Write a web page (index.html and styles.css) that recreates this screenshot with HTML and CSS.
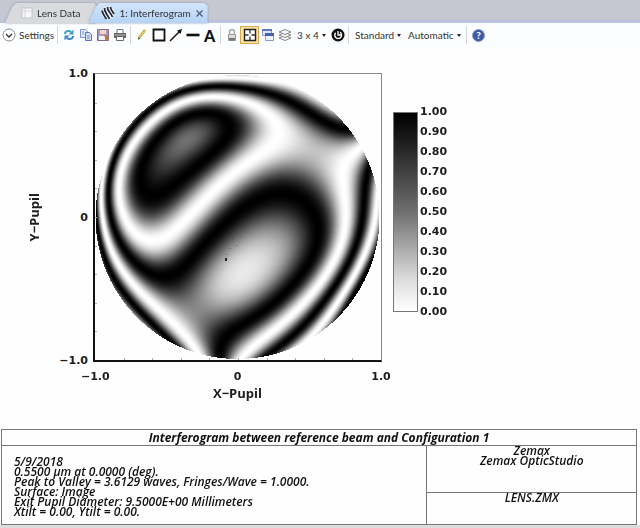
FILE: index.html
```
<!DOCTYPE html>
<html lang="en">
<head>
    <meta charset="UTF-8">
    <meta name="viewport" content="width=device-width, initial-scale=1.0">
    <title>Interferogram</title>
    <link rel="stylesheet" href="styles.css">
</head>
<body>
    <nav class="tabs">
        <div class="tab-wrap">
            <button class="tab">
                <svg width="12" height="12" viewBox="0 0 12 12"><rect x="1" y="1" width="10" height="10" fill="#f8f8f8" stroke="#c4c4c8"/><path d="M1 4h10M4 1v10" stroke="#d6d6da"/></svg>
                Lens Data
            </button>
        </div>
        <div class="tab-wrap">
            <button class="tab active">
                <svg width="14" height="14" viewBox="0 0 14 14"><circle cx="7" cy="7" r="6.500" fill="#f4f7fb"/><g fill="none" stroke="#222b3a" stroke-width="1.800"><path d="M1.200 4.500c0 3 2 5 4.300 8.500"/><path d="M3.500 2c-.5 4 3 6 5 11"/><path d="M6.500 1c-.5 4 3 5 5 10"/><path d="M9.500 1c0 3 2 4 3.500 7"/></g></svg>
                1: Interferogram
                <svg class="close" width="7" height="7" viewBox="0 0 7 7"><path d="M.5.5l6 6M6.500.5l-6 6" stroke="#4a5a78" stroke-width="1.200"/></svg>
            </button>
        </div>
    </nav>

    <div class="toolbar">
        <button class="settings">
            <svg width="14" height="14" viewBox="0 0 14 14"><circle cx="7" cy="7" r="6" fill="#fff" stroke="#8c8c8c"/><path d="M4 6l3 3 3-3" fill="none" stroke="#333" stroke-width="1.300"/></svg>
            Settings
        </button>
        <span class="sep"></span>
        <button class="tool" aria-label="Update">
            <svg viewBox="0 0 14 14"><path d="M3 6c0-3 4-4 6-2" fill="none" stroke="#3b9fc4" stroke-width="2"/><path d="M11.500 1.500v5h-5z" fill="#3b9fc4"/><path d="M11 8c0 3-4 4-6 2" fill="none" stroke="#3b86c8" stroke-width="2"/><path d="M2.500 12.500v-5h5z" fill="#3b86c8"/></svg>
        </button>
        <button class="tool" aria-label="Copy">
            <svg viewBox="0 0 14 14"><path d="M1.500 1.500h5l2 2v6h-7z" fill="#e4ebfb" stroke="#8094d8"/><path d="M6.500 4.500h4l2 2v6h-6z" fill="#d3ddf8" stroke="#5c72c8"/><path d="M8 8h3M8 10h3M3 4h2M3 6h2" stroke="#7f92d8"/></svg>
        </button>
        <button class="tool" aria-label="Save">
            <svg viewBox="0 0 14 14"><path d="M1.500 1.500h11v11h-11z" fill="#a99cc4" stroke="#7e6a9c"/><path d="M4 2h6v4H4z" fill="#f2d6c0"/><path d="M3 8h6v4H3z" fill="#f3f0f6"/><path d="M8 6l5 3-3 4z" fill="#c4713a"/></svg>
        </button>
        <button class="tool" aria-label="Print">
            <svg viewBox="0 0 14 14"><path d="M4 1.500h6v4H4z" fill="#fff" stroke="#777"/><path d="M1 5h12v5H1z" fill="#666"/><path d="M2 7h10" stroke="#bbb"/><path d="M3.500 8.500h7v4h-7z" fill="#fff" stroke="#666"/></svg>
        </button>
        <span class="sep"></span>
        <button class="tool" aria-label="Pencil">
            <svg viewBox="0 0 14 14"><path d="M4 10l6-8" stroke="#c9a640" stroke-width="2.600"/><path d="M4.500 9.500l5.500-7" stroke="#efdc8c"/><path d="M3 12l.3-3 2 1.500z" fill="#555"/></svg>
        </button>
        <button class="tool" aria-label="Rectangle">
            <svg viewBox="0 0 14 14"><path d="M1.500 1.500h11v11h-11z" fill="none" stroke="#111" stroke-width="1.800"/></svg>
        </button>
        <button class="tool" aria-label="Arrow">
            <svg viewBox="0 0 14 14"><path d="M1 13L10 4" stroke="#111" stroke-width="1.500"/><path d="M13 1l-1.500 5-3.500-3.500z" fill="#111"/></svg>
        </button>
        <button class="tool" aria-label="Line">
            <svg viewBox="0 0 14 14"><path d="M.5 7h13" stroke="#111" stroke-width="2.600"/></svg>
        </button>
        <button class="tool letter">A</button>
        <span class="sep"></span>
        <button class="tool" aria-label="Lock">
            <svg viewBox="0 0 14 14"><path d="M4.500 7V4a2.500 2.500 0 0 1 5 0v3" fill="#f4f4f4" stroke="#a5a5a5" stroke-width="1.300"/><path d="M3.500 6.500h7v6h-7z" fill="#dedede" stroke="#999"/><path d="M4 10h6v2.500H4z" fill="#777"/></svg>
        </button>
        <button class="tool selected" aria-label="Fit to window">
            <svg viewBox="0 0 14 14"><path d="M1.500 1.500h11v11h-11z" fill="#fff" stroke="#222" stroke-width="1.400"/><path d="M7 1v4.500M7 8.500V13M1 7h4.500M8.500 7H13" stroke="#333" stroke-width="1.300"/></svg>
        </button>
        <button class="tool" aria-label="Windows">
            <svg viewBox="0 0 14 14"><path d="M1.500 1.500h9v6h-9z" fill="#dfe5f2" stroke="#8d9bc4"/><path d="M1 1h10v2H1z" fill="#6077bd"/><path d="M4.500 5.500h8v7h-8z" fill="#eef1f8" stroke="#8d9bc4"/><path d="M4 5h9v3H4z" fill="#4560b0"/></svg>
        </button>
        <button class="tool" aria-label="Layers">
            <svg viewBox="0 0 14 14"><g fill="#f6f6f6" stroke="#888"><path d="M1 10l6-2.500 6 2.500-6 2.500z"/><path d="M1 7l6-2.500L13 7 7 9.500z"/><path d="M1 4l6-2.500L13 4 7 6.500z"/></g></svg>
        </button>
        <label class="drop"><select aria-label="Window layout"><option>3 x 4</option></select></label>
        <button class="tool" aria-label="Reset">
            <svg viewBox="0 0 14 14"><circle cx="7" cy="7" r="6.500" fill="#0c0c0c"/><path d="M9 4.200A3.400 3.400 0 1 1 4.600 4.800" fill="none" stroke="#fff" stroke-width="1.400"/><path d="M7 3v4h3" fill="none" stroke="#fff" stroke-width="1.300"/></svg>
        </button>
        <span class="sep"></span>
        <label class="drop"><select aria-label="Display"><option>Standard</option></select></label>
        <label class="drop"><select aria-label="Update mode"><option>Automatic</option></select></label>
        <span class="sep"></span>
        <button class="tool help" aria-label="Help">?</button>
    </div>

    <main class="graph">
        <div class="y-title">Y&minus;Pupil</div>
        <div class="y-ticks"><span>1.0</span><span>0</span><span>&minus;1.0</span></div>
        <div class="plot"><canvas id="fringes" width="286" height="286"></canvas></div>
        <div class="scale">
            <div class="scale-bar"></div>
            <ul class="scale-labels">
                <li>1.00</li>
                <li>0.90</li>
                <li>0.80</li>
                <li>0.70</li>
                <li>0.60</li>
                <li>0.50</li>
                <li>0.40</li>
                <li>0.30</li>
                <li>0.20</li>
                <li>0.10</li>
                <li>0.00</li>
            </ul>
        </div>
        <div class="x-axis">
            <div class="x-ticks"><span>&minus;1.0</span><span>0</span><span>1.0</span></div>
            <div class="x-title">X&minus;Pupil</div>
        </div>
    </main>

    <footer>
        <table class="info">
            <tr>
                <th colspan="2">Interferogram between reference beam and Configuration 1</th>
            </tr>
            <tr>
                <td rowspan="2" class="details">
                    5/9/2018<br>
                    0.5500 µm at 0.0000 (deg).<br>
                    Peak to Valley = 3.6129 waves, Fringes/Wave = 1.0000.<br>
                    Surface: Image<br>
                    Exit Pupil Diameter: 9.5000E+00 Millimeters<br>
                    Xtilt = 0.00, Ytilt = 0.00.
                </td>
                <td class="product">Zemax<br>Zemax OpticStudio</td>
            </tr>
            <tr>
                <td class="file">LENS.ZMX</td>
            </tr>
        </table>
    </footer>

    <script src="fringes.js"></script>
</body>
</html>
```
FILE: styles.css
```
:root {
    --ui-font: Lato, "Open Sans", sans-serif;
    --graph-font: "Open Sans", "Noto Sans", sans-serif;
    --tick-font: "DejaVu Sans", sans-serif;
    --line: #777;
    --ink: #1c1c1c;
}

* {
    box-sizing: border-box;
}

body {
    margin: 0;
    min-height: 100vh;
    display: flex;
    flex-direction: column;
    background: #fefefe;
    color: var(--ink);
    font-family: var(--graph-font);
}

button,
select {
    border: 0;
    padding: 0;
    background: none;
    color: #333;
    font-family: var(--ui-font);
    font-size: 10px;
}

/* tabs */
.tabs {
    display: flex;
    height: 23px;
    padding: 3px 0 0 5px;
    background: #c5c8d1;
    border-bottom: 3px solid #bac3dc;
}

.tab-wrap {
    height: 20px;
    filter: drop-shadow(0 0 1px #8b93a5);
}

.tab-wrap + .tab-wrap {
    margin-left: -8px;
}

.tab {
    display: flex;
    align-items: center;
    gap: 4px;
    height: 20px;
    padding: 0 16px 0 16px;
    background: #d9dade;
    clip-path: polygon(0 100%, 7px 20%, 11px 0, 97% 0, 100% 15%, 100% 100%);
}

.tab.active {
    padding: 0 5px 0 13px;
    background: linear-gradient(#d3e5fb, #b5d3f6);
}

.close {
    margin-left: 1px;
}

/* toolbar */
.toolbar {
    display: flex;
    align-items: center;
    height: 24px;
    padding-left: 2px;
    background: #fcfdfe;
}

.settings {
    display: flex;
    align-items: center;
    gap: 3px;
    margin-right: 1px;
}

.sep {
    width: 1px;
    height: 18px;
    margin: 0 2px;
    background: #d4d6da;
}

.tool {
    display: flex;
    align-items: center;
    justify-content: center;
    width: 17px;
    height: 18px;
}

.tool svg {
    width: 14px;
    height: 14px;
}

.letter {
    color: #111;
    font-size: 16px;
    font-weight: 900;
}

.selected {
    width: 19px;
    border: 1px solid #d9a94c;
    background: #fbe3a4;
}

.drop {
    display: flex;
    align-items: center;
    gap: 3px;
    padding: 0 3px 0 4px;
}

.drop select {
    appearance: none;
}

.drop::after {
    content: "";
    border: 2px solid transparent;
    border-top: 3px solid #222;
    border-bottom: 0;
}

.help {
    width: 13px;
    height: 13px;
    margin-left: 3px;
    border-radius: 50%;
    border: 1px solid #8a9ac4;
    background: #3f5aa6;
    color: #fff;
    font-weight: 900;
}

/* graph */
.graph {
    display: grid;
    grid-template-columns: 46px 42px 289px 1fr;
    column-gap: 5px;
    grid-template-rows: 289px auto;
    width: 100%;
    padding: 26px 0 20px;
    margin-left: -5px;
}

.y-title {
    justify-self: end;
    align-self: center;
    writing-mode: vertical-rl;
    transform: rotate(180deg);
    font-size: 13px;
    line-height: 14px;
    font-weight: 700;
}

.y-ticks,
.x-ticks,
.scale-labels {
    font-family: var(--tick-font);
    font-size: 11px;
    font-weight: 700;
}

.y-ticks {
    display: flex;
    flex-direction: column;
    justify-content: space-between;
    margin: -6px 0;
    line-height: 14px;
    text-align: right;
}

.plot {
    border: 1px solid #888;
    border-left: 2px solid #111;
    border-bottom: 2px solid #111;
}

.plot canvas {
    display: block;
}

.x-axis {
    grid-column: 3;
    padding-top: 8px;
}

.x-ticks {
    display: flex;
    justify-content: space-between;
    margin: 0 -12px;
    line-height: 14px;
}

.x-ticks span {
    width: 26px;
    text-align: center;
}

.x-title {
    font-size: 13px;
    font-weight: 700;
    line-height: 18px;
    text-align: center;
}

.scale {
    display: flex;
    gap: 2px;
    margin: 29px 0 0 6px;
}

.scale-bar {
    width: 25px;
    height: 200px;
    margin-top: 10px;
    border: 1px solid #777;
    background: linear-gradient(#000, #181818 12%, #6f6f6f 50%, #dcdcdc 84%, #fff);
}

.scale-labels {
    margin: 0;
    padding: 0;
    list-style: none;
    line-height: 20px;
}

/* description block */
footer {
    margin-top: auto;
    padding: 0 3px 0 1px;
    border-bottom: 3px solid #ddd;
}

.info {
    width: 100%;
    border-collapse: collapse;
    color: #111;
    font-size: 12px;
    font-style: italic;
    font-weight: 600;
    line-height: 10px;
}

.info th,
.info td {
    border: 1px solid var(--line);
    padding: 0;
}

.info th {
    height: 16px;
    font-weight: 700;
    line-height: 14px;
}

.info .details {
    padding: 4px 12px 0;
}

.product,
.file {
    width: 33%;
    text-align: center;
    vertical-align: top;
}

.product {
    height: 47px;
}

.file {
    height: 32px;
}
```
FILE: fringes.js
```
// Contours of the wavefront: phase in waves, then x,y pairs on the plot grid
const contours = [
    [0.21, [83, 81, 78, 85, 88, 77]],
    [0.17, [96, 74, 71, 89, 79, 73, 87, 89]],
    [0, [46, 102, 49, 90, 64, 62, 104, 43, 136, 49, 112, 85, 68, 118, 50, 115]],
    [-0.25, [160, 54]],
    [-0.5, [25, 116, 31, 76, 55, 46, 98, 24, 135, 23, 165, 34, 184, 53, 172, 69, 148, 90, 135, 101, 98, 133, 88, 149, 58, 166, 35, 153, 23, 139]],
    [-1, [13, 128, 17, 99, 38, 53, 72, 24, 105, 14, 135, 11, 155, 15, 188, 26, 215, 38, 245, 53, 255, 61,
        16, 142, 27, 169, 42, 188, 68, 199, 95, 189, 115, 167, 135, 146, 155, 130, 180, 120, 205, 123, 219, 138, 223, 156, 215, 186, 195, 209, 165, 236, 135, 259, 126, 272, 122, 284]],
    [-1.4, [165, 193, 150, 206]],
    [-1.3, [110, 240, 140, 170]],
    [-1.36, [132, 216, 170, 170]],
    [-1.17, [88, 213]],
    [-1.25, [205, 19]],
    [-1.5, [5, 116, 7, 137, 11, 87, 34, 44, 70, 15, 104, 4, 135, 3, 165, 6, 12, 169, 27, 196, 47, 223, 75, 249, 95, 269, 104, 280]],
    [-2, [1, 145, 5, 169, 15, 196, 33, 224, 62, 253, 80, 271]],
    [-0.66, [205, 72, 212, 82, 222, 92, 228, 82]],
    [-0.72, [195, 90, 210, 97, 226, 68]],
    [-0.5, [258, 73, 250, 103, 250, 136, 248, 156, 238, 186, 218, 216, 192, 246, 155, 273, 148, 284]],
    [0, [272, 86, 275, 96, 268, 129, 265, 156, 245, 206, 222, 236, 195, 263, 172, 281]],
    [0.5, [283, 126, 278, 156, 265, 186, 245, 223, 225, 253, 208, 269]],
    [1, [281, 174, 265, 213, 245, 240]]
];

const canvas = document.getElementById('fringes');
const ctx = canvas.getContext('2d');
const size = canvas.width;
const center = size / 2;
const radius = 142;
const degree = 8;

// Chebyshev products up to the given total degree
function terms(px, py) {
    const x = (px - center) / radius;
    const y = (py - center) / radius;
    const tx = [1, x];
    const ty = [1, y];
    for (let i = 2; i <= degree; i++) {
        tx.push(2 * x * tx[i - 1] - tx[i - 2]);
        ty.push(2 * y * ty[i - 1] - ty[i - 2]);
    }
    const out = [];
    for (let i = 0; i <= degree; i++) {
        for (let j = 0; i + j <= degree; j++) out.push(tx[i] * ty[j]);
    }
    return out;
}

// Least squares fit of the wavefront
function fitWavefront() {
    const m = terms(0, 0).length;
    const a = Array.from({ length: m }, () => new Array(m + 1).fill(0));

    contours.forEach(([phase, xy]) => {
        for (let k = 0; k < xy.length; k += 2) {
            const t = terms(xy[k], xy[k + 1]);
            for (let i = 0; i < m; i++) {
                for (let j = 0; j < m; j++) a[i][j] += t[i] * t[j];
                a[i][m] += t[i] * phase;
            }
        }
    });
    for (let i = 1; i < m; i++) a[i][i] += 0.003;

    for (let c = 0; c < m; c++) {
        for (let r = 0; r < m; r++) {
            if (r === c) continue;
            const f = a[r][c] / a[c][c];
            for (let k = c; k <= m; k++) a[r][k] -= f * a[c][k];
        }
    }
    return a.map((row, i) => row[m] / row[i]);
}

function drawFringes() {
    const w = fitWavefront();
    const image = ctx.createImageData(size, size);

    for (let y = 0; y < size; y++) {
        for (let x = 0; x < size; x++) {
            if (Math.hypot(x + 1 - center, y + 0.5 - center) > radius) continue;
            const phase = terms(x, y).reduce((sum, t, i) => sum + t * w[i], 0);
            const level = 127.5 - 127.5 * Math.cos(2 * Math.PI * phase);
            const at = (y * size + x) * 4;
            image.data[at] = image.data[at + 1] = image.data[at + 2] = level;
            image.data[at + 3] = 255;
        }
    }
    ctx.putImageData(image, 0, 0);

    // dust spots on the surface
    ctx.fillStyle = '#222';
    ctx.fillRect(130, 184, 2, 3);
    ctx.fillStyle = 'rgba(60, 60, 60, 0.3)';
    [[137, 165], [141, 171], [134, 174], [145, 162], [131, 180]].forEach(([x, y]) => ctx.fillRect(x, y, 2, 1));

    // axis ticks
    ctx.fillStyle = '#aaa';
    for (let i = 1; i < 10; i++) {
        const at = Math.round(i * size / 10);
        ctx.fillRect(0, at, 2, 1);
        ctx.fillRect(at, size - 2, 1, 2);
    }
}

drawFringes();
```
